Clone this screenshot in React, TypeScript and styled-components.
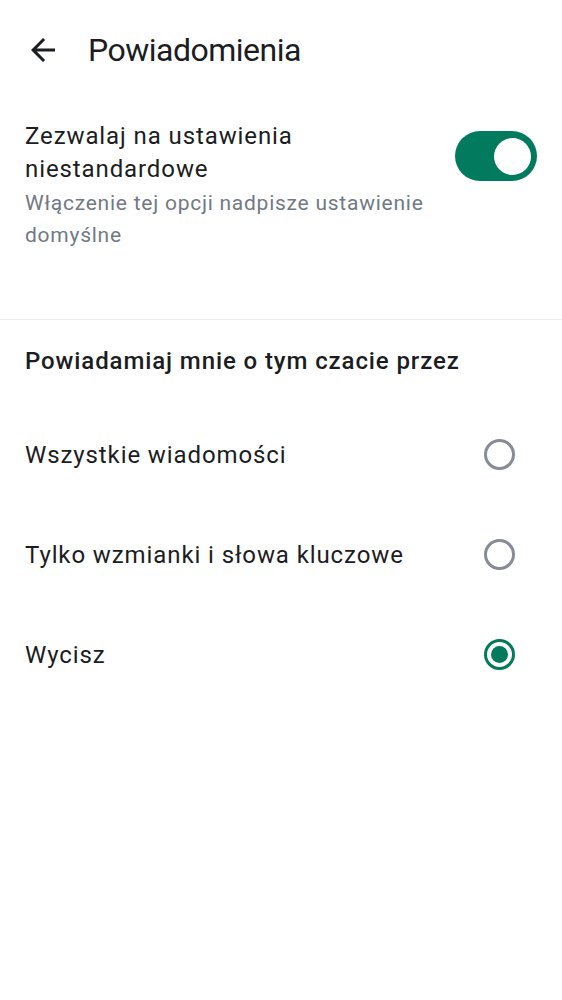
import React, { useState } from "react";
import styled, { createGlobalStyle } from "styled-components";

const Global = createGlobalStyle`
  html, body { margin: 0; padding: 0; background: #ffffff; }
  body { font-family: Roboto, "Noto Sans", "Liberation Sans", sans-serif; -webkit-font-smoothing: antialiased; }
  * { box-sizing: border-box; }
`;

const Page = styled.div`
  width: 562px;
  min-height: 1000px;
  background: #ffffff;
  color: #1b1d22;
  display: flex;
  flex-direction: column;
`;

const Header = styled.header`
  height: 100px;
  display: flex;
  align-items: center;
  padding-left: 25px;
  gap: 27px;
`;

const BackButton = styled.button`
  width: 36px;
  height: 36px;
  padding: 0;
  border: 0;
  background: transparent;
  display: flex;
  align-items: center;
  justify-content: center;
  color: #1b1d22;
`;

const Title = styled.h1`
  margin: 0;
  font-size: 32px;
  font-weight: 400;
  letter-spacing: -0.5px;
`;

const SettingRow = styled.section`
  display: flex;
  align-items: flex-start;
  justify-content: space-between;
  padding: 20px 25px 68px 25px;
  border-bottom: 1px solid #ececee;
`;

const SettingText = styled.div`
  display: flex;
  flex-direction: column;
  max-width: 410px;
`;

const SettingLabel = styled.div`
  font-size: 24px;
  line-height: 33.3px;
  letter-spacing: 0.9px;
`;

const SettingHint = styled.div`
  font-size: 21px;
  line-height: 32px;
  color: #717985;
  letter-spacing: 0.75px;
`;

const Switch = styled.button<{ $on: boolean }>`
  margin-top: 11px;
  width: 82px;
  height: 50px;
  border-radius: 25px;
  border: 0;
  padding: 0 6px;
  background: ${(p) => (p.$on ? "#017a5e" : "#c4c8cf")};
  display: flex;
  align-items: center;
  justify-content: ${(p) => (p.$on ? "flex-end" : "flex-start")};
  flex-shrink: 0;
`;

const Thumb = styled.span`
  width: 37px;
  height: 37px;
  border-radius: 50%;
  background: #ffffff;
`;

const SectionTitle = styled.h2`
  margin: 0;
  padding: 24px 25px 27px 25px;
  font-size: 24px;
  line-height: 34px;
  font-weight: 500;
  letter-spacing: 0.9px;
`;

const OptionRow = styled.label`
  height: 100px;
  display: flex;
  align-items: center;
  justify-content: space-between;
  padding: 0 47px 0 25px;
  font-size: 24px;
  letter-spacing: 0.9px;
  cursor: pointer;
`;

const Radio = styled.span<{ $checked: boolean }>`
  width: 31px;
  height: 31px;
  border-radius: 50%;
  border: 3px solid ${(p) => (p.$checked ? "#017a5e" : "#868b95")};
  display: flex;
  align-items: center;
  justify-content: center;
  &::after {
    content: "";
    width: 17px;
    height: 17px;
    border-radius: 50%;
    background: #017a5e;
    display: ${(p) => (p.$checked ? "block" : "none")};
  }
`;

const options = [
  "Wszystkie wiadomości",
  "Tylko wzmianki i słowa kluczowe",
  "Wycisz",
];

export default function App() {
  const [on, setOn] = useState(true);
  const [sel, setSel] = useState(2);
  return (
    <Page>
      <Global />
      <Header>
        <BackButton aria-label="Wstecz">
          <svg width="36" height="36" viewBox="0 0 24 24" fill="currentColor">
            <path d="M20 11H7.83l5.59-5.59L12 4l-8 8 8 8 1.41-1.41L7.83 13H20v-2z" />
          </svg>
        </BackButton>
        <Title>Powiadomienia</Title>
      </Header>
      <SettingRow>
        <SettingText>
          <SettingLabel>Zezwalaj na ustawienia niestandardowe</SettingLabel>
          <SettingHint>Włączenie tej opcji nadpisze ustawienie domyślne</SettingHint>
        </SettingText>
        <Switch $on={on} onClick={() => setOn(!on)} aria-label="Przełącz">
          <Thumb />
        </Switch>
      </SettingRow>
      <SectionTitle>Powiadamiaj mnie o tym czacie przez</SectionTitle>
      {options.map((o, i) => (
        <OptionRow key={o} onClick={() => setSel(i)}>
          <span>{o}</span>
          <Radio $checked={sel === i} />
        </OptionRow>
      ))}
    </Page>
  );
}
